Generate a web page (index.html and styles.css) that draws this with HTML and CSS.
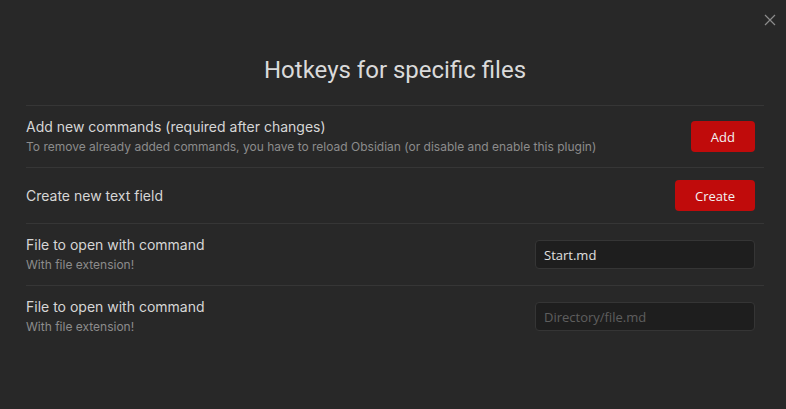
FILE: index.html
```html
<!DOCTYPE html>
<html>
<head>
<meta charset="utf-8">
<link rel="stylesheet" href="styles.css">
</head>
<body>
<div class="modal">
  <button class="close" aria-label="Close">
    <svg width="12" height="12" viewBox="0 0 12 12"><path d="M1 1L11 11M11 1L1 11" stroke="#8c8c8c" stroke-width="1.2" fill="none"/></svg>
  </button>
  <h2 class="title">Hotkeys for specific files</h2>
  <div class="setting">
    <div class="info">
      <div class="name">Add new commands (required after changes)</div>
      <div class="desc">To remove already added commands, you have to reload Obsidian (or disable and enable this plugin)</div>
    </div>
    <div class="control"><button class="cta">Add</button></div>
  </div>
  <div class="setting">
    <div class="info">
      <div class="name">Create new text field</div>
    </div>
    <div class="control"><button class="cta">Create</button></div>
  </div>
  <div class="setting">
    <div class="info">
      <div class="name">File to open with command</div>
      <div class="desc">With file extension!</div>
    </div>
    <div class="control"><input class="text" type="text" value="Start.md" placeholder="Directory/file.md"></div>
  </div>
  <div class="setting">
    <div class="info">
      <div class="name">File to open with command</div>
      <div class="desc">With file extension!</div>
    </div>
    <div class="control"><input class="text" type="text" value="" placeholder="Directory/file.md"></div>
  </div>
</div>
</body>
</html>
```
FILE: styles.css
```css
html, body {
  margin: 0;
  padding: 0;
  background: #282828;
  height: 100%;
}
body {
  font-family: Inter, "Noto Sans", sans-serif;
}
.modal {
  position: relative;
  padding: 0 22px 0 26px;
}
.close {
  position: absolute;
  top: 13px;
  right: 9px;
  width: 14px;
  height: 14px;
  padding: 0;
  border: none;
  background: transparent;
  display: flex;
  align-items: center;
  justify-content: center;
}
.title {
  margin: 0;
  padding-top: 56px;
  padding-bottom: 20px;
  font-family: Roboto, "Liberation Sans", sans-serif;
  font-weight: 400;
  font-size: 24px;
  line-height: 29px;
  color: #dadada;
  text-align: center;
}
.setting {
  display: flex;
  align-items: center;
  border-top: 1px solid #363636;
  padding: 12px 0;
  min-height: 31px;
}
.info {
  flex: 1;
}
.name {
  font-size: 14px;
  line-height: 17px;
  color: #d6d6d6;
}
.desc {
  margin-top: 4px;
  font-size: 12px;
  line-height: 16px;
  color: #8c8c8c;
}
.control {
  display: flex;
  align-items: center;
  padding-right: 9px;
}
.cta {
  height: 31px;
  padding: 0 20px;
  border: none;
  border-radius: 4px;
  background: #c00b0b;
  color: #f2f2f2;
  font-family: "Open Sans", "Noto Sans", sans-serif;
  font-size: 13px;
}
.text {
  box-sizing: border-box;
  width: 220px;
  height: 29px;
  padding: 0 8px;
  border: 1px solid #353535;
  border-radius: 4px;
  background: #1e1e1e;
  color: #e0e0e0;
  font-family: "Open Sans", "Noto Sans", sans-serif;
  font-size: 13px;
  outline: none;
}
.text::placeholder {
  color: #5e5e5e;
}
```
